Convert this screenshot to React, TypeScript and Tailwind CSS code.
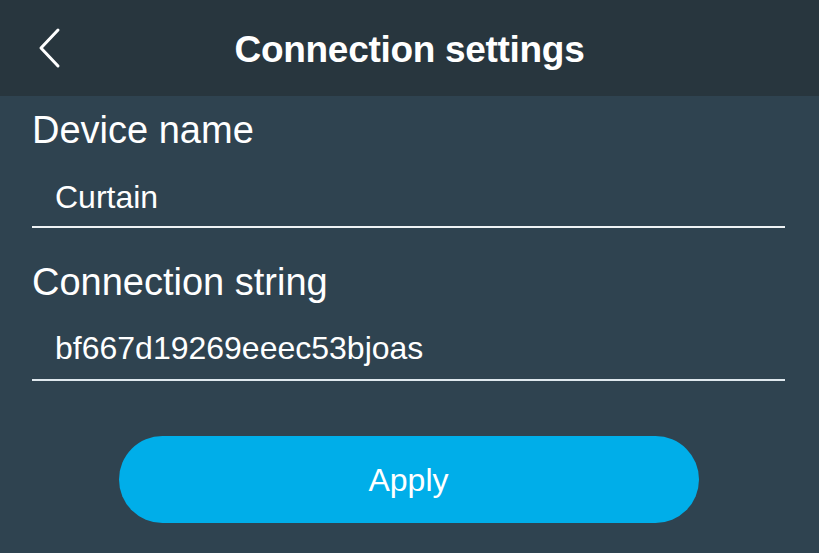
export default function App() {
  return (
    <div className="w-[819px] h-[553px] bg-[#2f4350] text-white font-['Liberation_Sans',Arial,sans-serif] overflow-hidden flex flex-col">
      {/* header */}
      <div className="h-[96px] bg-[#28363e] relative flex items-center justify-center shrink-0">
        <svg className="absolute left-[36px] top-[27px]" width="28" height="42" viewBox="0 0 28 42" fill="none">
          <polyline points="22,3 5,21 22,39" stroke="white" strokeWidth="3" strokeLinecap="round" strokeLinejoin="round" />
        </svg>
        <h1 className="text-[37px] font-bold leading-none tracking-[-0.3px] mt-[2px]">Connection settings</h1>
      </div>

      <div className="pl-[32px] pr-[34px] pt-[12px]">
        <div className="text-[38px] leading-[44px]">Device name</div>
        <div className="mt-[25px] pl-[23px] pb-[9px] border-b-2 border-[#eef2f4] text-[32px] leading-[40px]">Curtain</div>

        <div className="mt-[32px] text-[38px] leading-[44px]">Connection string</div>
        <div className="mt-[24px] pl-[23px] pb-[11px] border-b-2 border-[#dfe8ee] text-[32px] leading-[40px]">bf667d19269eeec53bjoas</div>
      </div>

      <div className="flex justify-center mt-[55px]">
        <button className="w-[580px] h-[87px] rounded-full bg-[#00aee9] text-[32px] text-white ml-[-2px]">Apply</button>
      </div>
    </div>
  )
}
